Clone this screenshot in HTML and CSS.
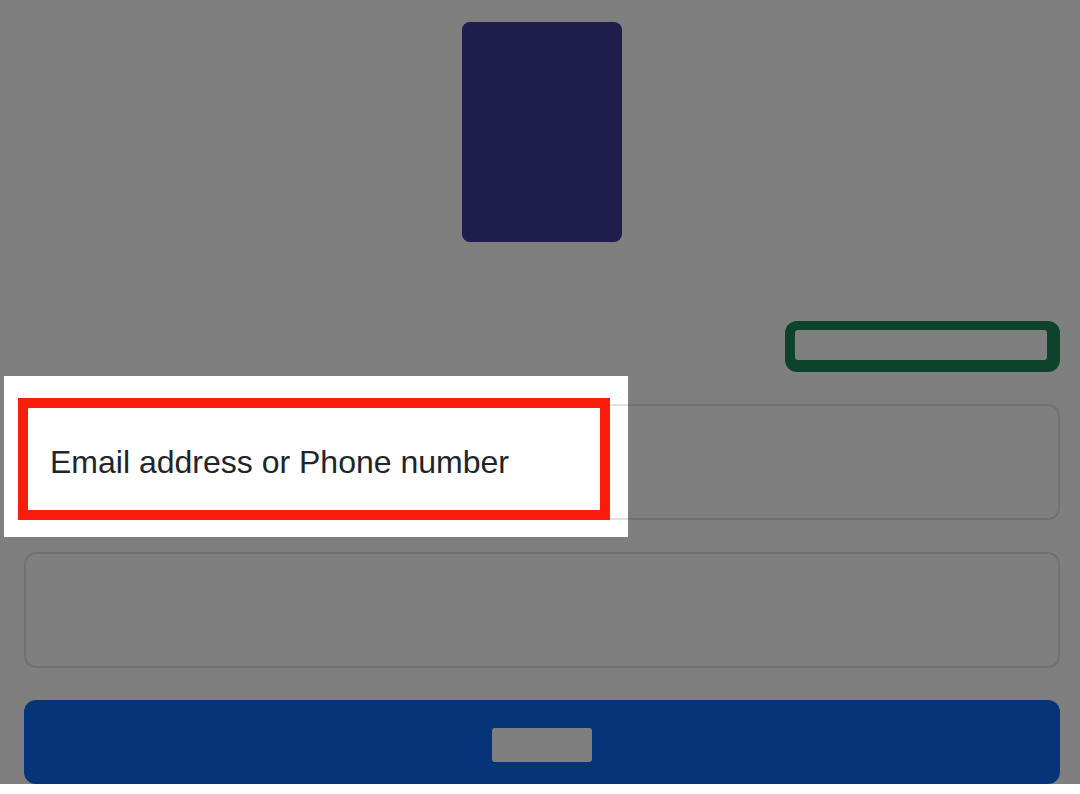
FILE: index.html
```html
<!DOCTYPE html>
<html lang="en">
<head>
  <meta charset="UTF-8">
  <title>Sign in</title>
  <link rel="stylesheet" href="styles.css">
</head>
<body>
  <div class="page">

    <!-- Brand -->
    <div class="logo"></div>

    <!-- Forgot link -->
    <div class="link-row">
      <div class="link-chip"><span class="chip-text"></span></div>
    </div>

    <!-- Account field (highlighted by the tour) -->
    <div class="field field-account">
      <label class="field-label">Email address or Phone number</label>
      <div class="tour-spot"></div>
      <div class="tour-ring"></div>
    </div>

    <!-- Password field -->
    <div class="field"></div>

    <!-- Submit -->
    <button class="submit-btn"><span class="btn-text"></span></button>

  </div>
</body>
</html>
```

FILE: styles.css
```css
body {
  margin: 0;
  background: white;
  color: #212529;
  font-family: "Liberation Sans", Arial, sans-serif;
  overflow: hidden;
}

.page {
  padding: 22px 20px 0 24px;
}

.logo {
  width: 160px;
  height: 220px;
  margin: 0 auto;
  background: #3e3c94;
  border-radius: 8px;
}

.link-row {
  display: flex;
  justify-content: flex-end;
  margin-top: 79px;
}

.link-chip {
  width: 275px;
  box-sizing: border-box;
  padding: 9px 13px 12px 10px;
  background: #198754;
  border-radius: 12px;
}

.chip-text {
  display: block;
  height: 30px;
  background: white;
  border-radius: 3px;
}

.field {
  position: relative;
  height: 116px;
  box-sizing: border-box;
  margin-top: 32px;
  padding: 32px 24px;
  border: 2px solid #dee2e6;
  border-radius: 12px;
}

.field-label {
  display: block;
  font-size: 32px;
  line-height: 48px;
}

/* tour overlay */
.tour-spot {
  position: absolute;
  left: -22px;
  top: -30px;
  width: 624px;
  height: 161px;
  box-shadow: 0 0 0 3000px rgba(0, 0, 0, 0.5);
  pointer-events: none;
  z-index: 10;
}

.tour-ring {
  position: absolute;
  left: -8px;
  top: -8px;
  width: 592px;
  height: 122px;
  box-sizing: border-box;
  border: 10px solid #fb1d0c;
  pointer-events: none;
  z-index: 11;
}

.submit-btn {
  display: flex;
  justify-content: center;
  width: 100%;
  height: 84px;
  margin-top: 32px;
  padding: 28px 0 0;
  border: none;
  border-radius: 12px;
  background: #0c68f2;
}

.btn-text {
  width: 100px;
  height: 34px;
  background: white;
  border-radius: 3px;
}
```
